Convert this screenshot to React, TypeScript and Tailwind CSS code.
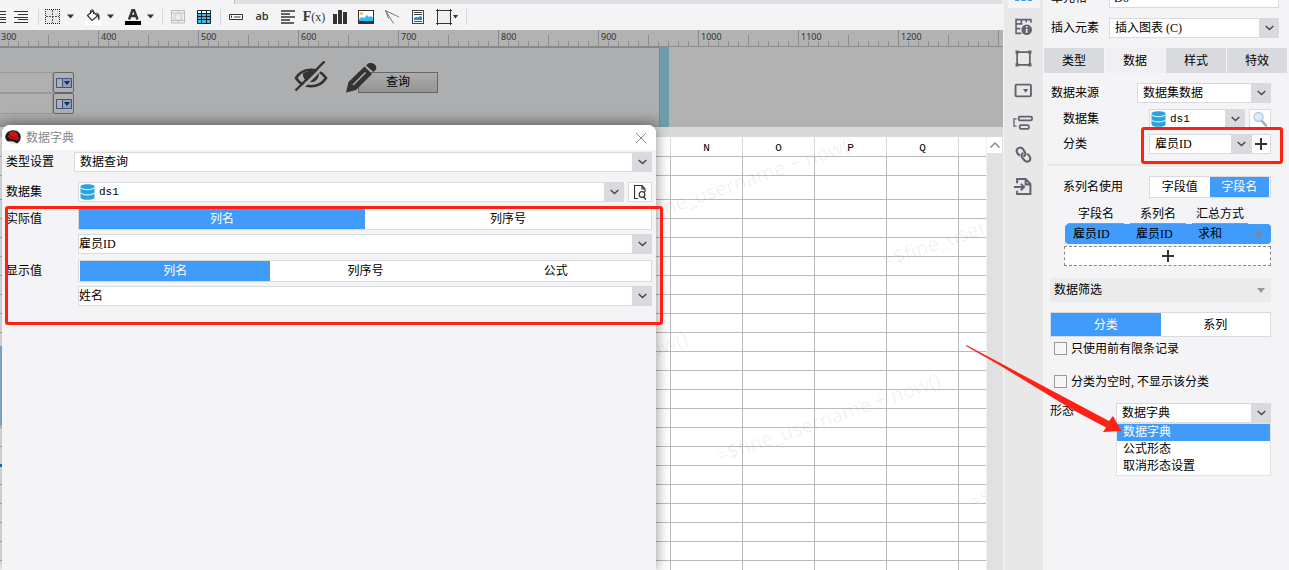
import type { ReactNode } from 'react';

const svgBase = { fill: 'none', 'aria-hidden': true } as const;

function Caret() {
  return (
    <svg {...svgBase} className="h-[5px] w-[7px] shrink-0" viewBox="0 0 7 5">
      <path d="M0 0.5h7L3.5 4.5z" fill="#333" />
    </svg>
  );
}

function Chevron() {
  return (
    <svg {...svgBase} className="h-[6px] w-[9px]" viewBox="0 0 9 6">
      <path d="M0.7 0.9 4.5 4.6 8.3 0.9" stroke="#45464a" strokeWidth="1.4" />
    </svg>
  );
}

function Database() {
  return (
    <svg {...svgBase} className="h-4 w-[15px]" viewBox="0 0 15 16">
      <path d="M0.5 2.6C0.5-.4 14.5-.4 14.5 2.6V13.4C14.5 16.6.5 16.6.5 13.4z" fill="#2ba3df" />
      <path d="M.5 3.6c1.500 2.700 12.500 2.700 14 0M.5 8.800c1.500 2.700 12.500 2.700 14 0" stroke="#d5effb" strokeWidth="1.100" />
    </svg>
  );
}

function Plus() {
  return (
    <svg {...svgBase} className="h-3 w-3" viewBox="0 0 12 12">
      <path d="M6 0v12M0 6h12" stroke="#333" strokeWidth="2" />
    </svg>
  );
}

type PickProps = { id: string; value: string; options?: string[]; className?: string; inset?: string; icon?: boolean };

function Pick({ id, value, options = [], className = '', inset = 'pl-[5px] text-xs', icon }: PickProps) {
  return (
    <div className={`relative h-5 ${className}`}>
      <select
        id={id}
        defaultValue={value}
        className={`block h-5 w-full appearance-none border border-[#d9dade] bg-white pr-5 leading-[18px] text-black outline-none ${inset}`}
      >
        <option>{value}</option>
        {options.map((o) => (
          <option key={o}>{o}</option>
        ))}
      </select>
      {icon && (
        <span className="pointer-events-none absolute top-[2px] left-[2px]">
          <Database />
        </span>
      )}
      <span className="pointer-events-none absolute inset-y-0 right-0 flex w-5 items-center justify-center bg-[#d9dade]">
        <Chevron />
      </span>
    </div>
  );
}

function Segments({ items, active, className = '' }: { items: string[]; active: number; className?: string }) {
  return (
    <div className={`flex border border-[#d9dade] bg-white ${className}`}>
      {items.map((t, i) => (
        <button
          key={t}
          type="button"
          className={i === active ? 'flex-1 bg-[#409bfa] text-white' : 'flex-1 text-black'}
        >
          {t}
        </button>
      ))}
    </div>
  );
}

function Tool({ label, children }: { label: string; children: ReactNode }) {
  return (
    <button type="button" aria-label={label} className="flex h-6 w-[26px] shrink-0 items-center justify-center">
      {children}
    </button>
  );
}

function DropTool({ label, children }: { label: string; children: ReactNode }) {
  return (
    <button type="button" aria-label={label} className="flex h-6 w-10 shrink-0 items-center gap-[6px] pl-[3px]">
      {children}
      <Caret />
    </button>
  );
}

function Rule() {
  return <span className="mr-[3px] ml-1 h-4 w-px shrink-0 bg-[#d6d6d8]" />;
}

function AlignRight() {
  return (
    <svg {...svgBase} className="h-3 w-[14px]" viewBox="0 0 14 12">
      <path d="M0 .5h14M4 3.500h10M0 6.500h14M4 8.500h10M0 11.500h14" stroke="#333" />
    </svg>
  );
}

function Toolbar() {
  return (
    <div className="flex h-[26px] items-center overflow-hidden bg-[#f4f4f7] pb-px">
      <div className="-ml-[18px] flex shrink-0">
        <button type="button" aria-label="居中" className="flex h-6 w-[26px] items-center justify-end pr-[2px]">
          <AlignRight />
        </button>
      </div>
      <Tool label="右对齐"><AlignRight /></Tool>
      <Rule />
      <DropTool label="边框">
        <svg {...svgBase} className="h-4 w-4" viewBox="0 0 16 16">
          <rect x=".5" y=".5" width="14" height="14" fill="#e9e9e9" />
          <path d="M0 .5h15M0 14.500h15M.5 0v15M14.500 0v15" stroke="#222" strokeDasharray="1 1" />
          <path d="M1 7.500h13M7.500 1v13" stroke="#555" strokeDasharray="2 1" />
        </svg>
      </DropTool>
      <DropTool label="填充">
        <svg {...svgBase} className="h-4 w-4" viewBox="0 0 16 16">
          <rect y="12" width="16" height="4" fill="#fff" />
          <path d="M2.500 6.500 7.500 2l5 5-5.500 4.500z" fill="#fff" stroke="#333" strokeWidth="1.200" />
          <path d="M5.500 5V1.500q1.500-1.800 3 0V5" stroke="#333" />
          <path d="M11 3.500c3 .5 4 2.500 3.500 7-1 1-1.500 0-1.500-1.500V7z" fill="#333" />
        </svg>
      </DropTool>
      <DropTool label="字体颜色">
        <svg {...svgBase} className="h-4 w-4" viewBox="0 0 16 16">
          <path d="m4 10.500 3.500-9.500h1.500l3.500 9.500M5.500 7h5.500" stroke="#333" strokeWidth="2.400" />
          <rect y="12" width="16" height="4" fill="#000" />
        </svg>
      </DropTool>
      <span className="mr-[2px] h-4 w-px shrink-0 bg-[#d6d6d8]" />
      <Tool label="合并单元格">
        <svg {...svgBase} className="h-[14px] w-[14px]" viewBox="0 0 14 14">
          <path d="M.5.5h13v12.500H.5zM.5 3h13M.5 10.500h13M7 .5V3M7 10.500V13" stroke="#bbb" />
          <rect x="2" y="4" width="10" height="6" fill="#ddd" />
          <circle cx="7" cy="7" r="1.500" stroke="#fff" />
        </svg>
      </Tool>
      <Tool label="表格">
        <svg {...svgBase} className="h-[14px] w-[14px]" viewBox="0 0 14 14">
          <rect x=".5" y=".5" width="13" height="13" fill="#42b8f5" />
          <rect x="1" y="1" width="12" height="3" fill="#fff" />
          <path d="M.5.5h13v13H.5zM0 3.500h14M0 6.500h14M0 9.500h14M4.500 0v14M9.500 0v14" stroke="#222" />
        </svg>
      </Tool>
      <span className="mr-[2px] ml-[3px] h-4 w-px shrink-0 bg-[#d6d6d8]" />
      <Tool label="文本框">
        <svg {...svgBase} className="h-[6px] w-[14px]" viewBox="0 0 14 6">
          <path d="M.5.5h13v5H.5z" stroke="#333" fill="#fff" />
          <path d="M2.500 1.500v2.500M5 3h6.500" stroke="#333" />
        </svg>
      </Tool>
      <Tool label="标签">
        <span className="font-['Open_Sans',sans-serif] text-[11px] font-semibold text-[#333]">ab</span>
      </Tool>
      <Tool label="段落">
        <svg {...svgBase} className="h-[14px] w-[14px]" viewBox="0 0 14 14">
          <path d="M0 1h14M0 4h9M0 7h14M0 10h9M0 13h13" stroke="#333" strokeWidth="1.600" />
        </svg>
      </Tool>
      <Tool label="公式">
        <span className="font-['Liberation_Serif',serif] text-sm leading-4 font-bold text-[#333]">
          F<span className="text-xs font-normal">(x)</span>
        </span>
      </Tool>
      <Tool label="图表">
        <svg {...svgBase} className="h-[14px] w-[14px]" viewBox="0 0 14 14">
          <path d="M0 4h4v10H0zM5 0h4v14H5zM10 2h4v12h-4z" fill="#333" />
        </svg>
      </Tool>
      <Tool label="图片">
        <svg {...svgBase} className="h-[14px] w-4" viewBox="0 0 16 14">
          <rect x=".5" y=".5" width="15" height="12.500" fill="#fff" stroke="#333" />
          <circle cx="3.500" cy="3.500" r="1.500" fill="#f7b84b" />
          <path d="M1 11V9l3-2 2 1 3-3 2 2 2-1 2 2v3z" fill="#35b9f5" />
          <path d="M0 11h16v3H0z" fill="#333" />
        </svg>
      </Tool>
      <Tool label="斜线">
        <svg {...svgBase} className="h-[14px] w-[14px]" viewBox="0 0 14 14">
          <path d="M.5.5 14 7M.5.5l8 13M.5.5l3 8" stroke="#777" />
        </svg>
      </Tool>
      <Tool label="子报表">
        <svg {...svgBase} className="h-[14px] w-3" viewBox="0 0 12 14">
          <rect x=".5" y=".5" width="11" height="13" fill="#fff" stroke="#444" />
          <path d="M2 2.500h8M2 4.500h8M2 11.500h8" stroke="#444" />
          <path d="M2 10V8l2-1 2 .5L8 6l2 1v3z" fill="#2187e8" />
        </svg>
      </Tool>
      <button type="button" aria-label="形状" className="flex h-6 w-[30px] shrink-0 items-center gap-px pl-[5px]">
        <svg {...svgBase} className="h-4 w-4" viewBox="0 0 16 16">
          <path d="M1.500 0v16M14.500 0v16M0 1.500h16M0 14.500h16" stroke="#333" />
          <path d="M2 2h12v12H2z" fill="#f0f0f0" />
        </svg>
        <svg {...svgBase} className="h-1 w-[5px]" viewBox="0 0 5 4"><path d="M0 0h5L2.500 3.500z" fill="#333" /></svg>
      </button>
      <span className="ml-[5px] h-4 w-px shrink-0 bg-[#d6d6d8]" />
    </div>
  );
}

const minorTicks = [10, 20, 30, 40, 60, 70, 80, 90];
const marks = ['300', '400', '500', '600', '700', '800', '900', '1000', '1100', '1200'];

function Ruler() {
  return (
    <div className="h-[17px] overflow-hidden border-b border-[#8c8c8c] bg-[#b2b2b2]">
      <div className="-ml-[2px] flex">
        {marks.map((m) => (
          <div key={m} className="relative h-4 w-[100px] shrink-0">
            <svg {...svgBase} className="h-4 w-[100px]" viewBox="0 0 100 16">
              <path d="M.5 0v16M50.500 5v11" stroke="#8c8c8c" />
              {minorTicks.map((x) => (
                <path key={x} d={`M${x + 0.5} 11v5`} stroke="#8c8c8c" />
              ))}
            </svg>
            <span className="absolute top-0 left-[3px] font-['Noto_Sans',sans-serif] text-[9px] leading-[13px] text-[#333]">{m}</span>
          </div>
        ))}
        <span className="h-4 w-px shrink-0 bg-[#8c8c8c]" />
      </div>
    </div>
  );
}

function ComboWidget() {
  return (
    <div className="flex h-[21px]">
      <span className="w-[53px] border border-l-0 border-[#999] bg-[#b0b0b0]" />
      <span className="flex w-[21px] items-center justify-center rounded-[2px] border border-[#666] bg-[#b0b0b0]">
        <svg {...svgBase} className="h-[10px] w-4" viewBox="0 0 16 10">
          <path d="M.5.5h15v9H.5z" stroke="#3c5480" fill="#b0b0b0" />
          <path d="M6.500.5h9v9h-9z" stroke="#3c5480" fill="#8ba0bd" />
          <path d="M8 3h6l-3 4z" fill="#14285a" />
        </svg>
      </span>
    </div>
  );
}

function FormCanvas() {
  return (
    <div className="flex h-20 shrink-0 bg-[#b2b2b2]">
      <div className="relative w-[660px] border-t border-r border-[#858585] bg-linear-to-b from-[#adaeb0] from-80% to-[#9c9d9f]">
        <div className="absolute top-6 left-0">
          <ComboWidget />
          <ComboWidget />
        </div>
        <button type="button" className="absolute top-6 left-[358px] h-[21px] w-20 border border-[#666] bg-linear-to-b from-[#acacac] to-[#949494] text-xs leading-[19px] text-black">
          查询
        </button>
        <svg {...svgBase} className="absolute top-[13px] left-[294px] h-8 w-[34px]" viewBox="0 0 34 32">
          <path d="M2 17C8 7 24 5 32 17 25 28 9 28 2 17z" stroke="#333" strokeWidth="2.600" />
          <path d="M9 12a8 8 0 1 0 15-2.500L17 9z" fill="#333" />
          <path d="m3.500 31.500 30-30" stroke="#adaeb0" strokeWidth="3" />
          <path d="m1.500 29.500 29-29" stroke="#333" strokeWidth="2.400" />
        </svg>
        <svg {...svgBase} className="absolute top-[14px] left-[346px] h-[31px] w-[31px]" viewBox="0 0 31 31">
          <path d="M0 30.500 2.500 20 18.500 4.500l7.500 7.500L10 28z" fill="#333" />
          <path d="M7 23 19.500 10.500" stroke="#b4b4b4" strokeWidth="1.500" />
          <path d="M21 2.500C24-1 32 2 30 7.500l-2.500 2.500-7.500-6.500z" fill="#333" />
        </svg>
      </div>
      <div className="w-[9px] bg-[#6e9da9]" />
    </div>
  );
}

const stamps = [
  'left-[634px] top-[72px]',
  'left-[886px] top-[114px]',
  'left-[467px] top-[267px]',
  'left-[720px] top-[309px]',
  'left-[973px] top-[355px]',
  'left-[553px] top-[508px]',
];
const letters = ['N', 'O', 'P', 'Q'];
const rowHeights = ['h-[19px]', 'h-[24px]', ...Array.from({ length: 20 }, () => 'h-[19px]')];

function Sheet() {
  return (
    <div className="flex min-h-0 flex-1 border-t-[10px] border-[#d9d9db] bg-white">
      <div className="relative min-w-0 flex-1 overflow-hidden">
        <table className="w-full table-fixed border-separate border-spacing-0">
          <colgroup>
            <col className="w-[671px]" />
            {letters.map((l) => <col key={l} className="w-[72px]" />)}
            <col />
          </colgroup>
          <thead>
            <tr className="h-5">
              <th className="border-r border-b border-r-[#d9d9db] border-b-[#bbb] p-0" />
              {letters.map((l) => (
                <th key={l} className="border-r border-b border-r-[#d9d9db] border-b-[#bbb] p-0 pt-[2px] font-['Liberation_Mono',monospace] text-[11px] leading-4 font-normal text-black">{l}</th>
              ))}
              <th className="border-b border-[#bbb] p-0" />
            </tr>
          </thead>
          <tbody>
            {rowHeights.map((h, r) => (
              <tr key={r} className={h}>
                <td className="border-r border-b border-[#bbb] p-0" />
                {letters.map((l) => <td key={l} className="border-r border-b border-[#bbb] p-0" />)}
                <td className="border-b border-[#bbb] p-0" />
              </tr>
            ))}
          </tbody>
        </table>
        <span className="absolute top-[209px] left-0 h-20 w-1 bg-[#9cc9ee]" />
        <span className="absolute top-[327px] left-0 h-[3px] w-1 bg-[#2b7de0]" />
        {stamps.map((s) => (
          <span key={s} className={`pointer-events-none absolute origin-bottom-left -rotate-[19deg] font-['Noto_Sans',sans-serif] text-xl leading-5 whitespace-nowrap text-black/6 ${s}`}>
            =$fine_username + now()
          </span>
        ))}
      </div>
      <div className="flex w-[17px] flex-col border-l border-[#eee] bg-[#e1e1e1]">
        <button type="button" aria-label="向上滚动" className="flex h-4 w-[15px] items-center justify-center bg-white">
          <svg {...svgBase} className="h-[6px] w-[10px]" viewBox="0 0 10 6"><path d="m.5 5.500 4.500-4.500 4.500 4.500" stroke="#777" strokeWidth="1.200" /></svg>
        </button>
      </div>
    </div>
  );
}

function HatLogo() {
  return (
    <svg {...svgBase} className="h-[15px] w-4" viewBox="0 0 16 15">
      <path d="M.3 7.500C0 4 3 .5 8 .3c5 0 8 3.500 7.700 7.200-.2 3-1.700 5-3.700 6L8 11.500 3 11.500C1.500 10.500.4 9 .3 7.500z" fill="#191919" />
      <path d="M4.500 2.500Q6 0 8.500 1.500q4-.7 4.500 5c2.500 2 1 4-2.500 3.500C6 9.500 2 7 3 5.500q.6-.8 1.500-.3z" fill="#d3121c" />
      <path d="M4.500 5.500q3 3 7.500 2.500" stroke="#6d0a10" />
      <path d="m4 10.500 2 1.500 4 .5 1 2-3-.8-3-.7z" fill="#ddd" />
    </svg>
  );
}

function DictionaryDialog() {
  return (
    <section role="dialog" aria-label="数据字典" className="absolute top-[125px] bottom-0 left-[2px] w-[654px] rounded-t-lg bg-[#f4f4f7] shadow-[0_0_14px_rgba(0,0,0,0.45)]">
      <header className="flex h-[25px] items-center rounded-t-lg bg-white pl-[3px]">
        <HatLogo />
        <h1 className="ml-[5px] flex-1 text-xs leading-[22px] text-[#888]">数据字典</h1>
        <button type="button" aria-label="关闭" className="mr-[10px] p-0">
          <svg {...svgBase} className="h-[10px] w-[10px]" viewBox="0 0 10 10"><path d="m0 0 10 10M10 0 0 10" stroke="#888" /></svg>
        </button>
      </header>
      <div className="flex flex-col pt-[2px] pr-1 pl-1">
        <div className="flex h-5 items-center">
          <label htmlFor="kind" className="w-[68px] shrink-0">类型设置</label>
          <Pick id="kind" value="数据查询" className="flex-1" />
        </div>
        <div className="mt-[10px] flex h-5 items-center">
          <label htmlFor="dataset" className="w-[72px] shrink-0">数据集</label>
          <Pick id="dataset" value="ds1" icon inset="pl-5 font-['Liberation_Mono',monospace] text-[11px]" className="flex-1" />
          <button type="button" aria-label="预览" className="ml-1 flex h-5 w-6 items-center justify-center border border-[#d9dade] bg-white">
            <svg {...svgBase} className="h-[15px] w-[13px]" viewBox="0 0 13 15">
              <path d="M4 13.500H.5V.5H8l3 3.500v3M8 .5V4h3" stroke="#333" strokeWidth="1.200" />
              <circle cx="8" cy="9.500" r="2.800" stroke="#333" strokeWidth="1.200" />
              <path d="m9.500 12 2.500 2.500" stroke="#333" strokeWidth="1.400" />
            </svg>
          </button>
        </div>
        <div className="mt-[6px] flex">
          <span className="w-[72px] shrink-0 leading-[22px]">实际值</span>
          <div className="flex flex-1 flex-col gap-1">
            <Segments items={['列名', '列序号']} active={0} className="h-[22px]" />
            <Pick id="actual" value="雇员ID" inset="pl-0 text-xs" />
          </div>
        </div>
        <div className="mt-[6px] flex">
          <span className="w-[72px] shrink-0 leading-[22px]">显示值</span>
          <div className="flex flex-1 flex-col gap-1">
            <Segments items={['列名', '列序号', '公式']} active={0} className="h-[22px] pl-px" />
            <Pick id="shown" value="姓名" inset="pl-0 text-xs" />
          </div>
        </div>
      </div>
      <div className="pointer-events-none absolute top-[81px] -right-[7px] left-[3px] h-[119px] rounded-[3px] border-[3px] border-[#ff2116]" />
    </section>
  );
}

const sideIcons: { name: string; art: ReactNode }[] = [
  { name: '属性', art: <path d="M0 15V1h4v14zM6 15V1h4v14zM12 15V1h4v14z" fill="#409bfa" /> },
  {
    name: '单元格属性',
    art: (
      <>
        <path d="M6 14.500H1v-14M1 1.500h14v3M1 5.500h6M1 10h4M6 1v5M10.500 1v3" stroke="#5f6470" strokeWidth="1.500" />
        <circle cx="11" cy="11" r="5" fill="#5f6470" />
        <path d="M11 10v4M11 7.500V9" stroke="#e8e8e8" strokeWidth="1.600" />
      </>
    ),
  },
  {
    name: '控件设置',
    art: (
      <>
        <path d="M2 2h12v12H2z" stroke="#5f6470" strokeWidth="1.600" />
        <path d="M.5.5h3v3h-3zM12.500.5h3v3h-3zM.5 12.500h3v3h-3zM12.500 12.500h3v3h-3z" fill="#5f6470" />
      </>
    ),
  },
  {
    name: '下拉控件',
    art: (
      <>
        <rect x=".5" y="2.500" width="14.500" height="11" rx="1" stroke="#5f6470" strokeWidth="1.800" />
        <path d="M7.500 6.500h5L10 10z" fill="#5f6470" />
      </>
    ),
  },
  {
    name: '条件属性',
    art: (
      <>
        <rect x="3.500" y="2.500" width="12.500" height="3.500" rx="1" stroke="#5f6470" strokeWidth="1.700" />
        <rect x="4.500" y="10.500" width="8.500" height="3.500" rx="1" stroke="#5f6470" strokeWidth="1.700" />
        <path d="M1.500 4.500H-1v7h2.500" stroke="#5f6470" strokeWidth="1.200" />
      </>
    ),
  },
  {
    name: '超级链接',
    art: (
      <g stroke="#5f6470" strokeWidth="2">
        <path d="M4.500 9C1 6.500 1 3.500 2.500 2.500c2-2 4-1 5 .5L9.500 6c.8 2-.2 3.200-1.500 4" />
        <path d="M11.500 7.500c3.500 2.500 3.500 5 2 6.500-2 1.500-4 .5-5-1L6.500 10.500C5.700 8.500 6.500 7 8 6.500" />
      </g>
    ),
  },
  {
    name: '导出',
    art: <path d="M2 5V1h8l4.500 4.500V15H2v-3M10 1v5h4.500M-1 8.500h9.500M5.500 5.500l3 3-3 3" stroke="#5f6470" strokeWidth="1.900" />,
  },
];

function SideBar() {
  return (
    <nav className="flex w-10 shrink-0 flex-col items-center overflow-hidden border-l border-[#f4f4f4] bg-[#e8e8e8]">
      <div className="-mt-[22px] flex flex-col">
        {sideIcons.map((s, i) => (
          <button
            key={s.name}
            type="button"
            aria-label={s.name}
            className={i === 0 ? 'mb-[2px] flex h-[30px] w-8 items-center justify-center bg-[#f4f4f7]' : 'flex h-8 w-8 items-center justify-center'}
          >
            <svg {...svgBase} className="h-[17px] w-[17px] overflow-visible" viewBox="0 0 16 16">{s.art}</svg>
          </button>
        ))}
      </div>
    </nav>
  );
}

const tabs = ['类型', '数据', '样式', '特效'];
const seriesHead = ['字段名', '系列名', '汇总方式'];
const seriesRow = ['雇员ID', '雇员ID', '求和'];

function PropertyPanel() {
  return (
    <aside className="relative w-[246px] shrink-0 bg-[#f4f4f7]">
      <div className="h-2 overflow-hidden">
        <div className="-mt-3 flex h-5 items-center pr-[10px] pl-2">
          <label htmlFor="cell" className="w-[58px] shrink-0 leading-5">单元格</label>
          <input id="cell" defaultValue="D6" className="h-5 min-w-0 flex-1 border border-[#d9dade] bg-white pl-1 outline-none" />
        </div>
      </div>
      <div className="mt-[10px] flex h-5 items-center pr-[10px] pl-2">
        <label htmlFor="element" className="w-[58px] shrink-0">插入元素</label>
        <Pick id="element" value="插入图表 (C)" className="flex-1" />
      </div>
      <div role="tablist" className="mt-[10px] mr-[2px] ml-px grid h-[25px] grid-cols-4 gap-px">
        {tabs.map((t) => (
          <button key={t} type="button" role="tab" aria-selected={t === '数据'} className={t === '数据' ? 'bg-[#f0f0f2]' : 'bg-[#d9dade]'}>
            {t}
          </button>
        ))}
      </div>
      <div className="flex flex-col pt-[10px] pr-[18px] pl-[7px]">
        <div className="flex h-5 items-center">
          <label htmlFor="source" className="w-[87px] shrink-0 pl-px">数据来源</label>
          <Pick id="source" value="数据集数据" className="flex-1" />
        </div>
        <div className="mt-[6px] flex h-5 items-center">
          <label htmlFor="set" className="w-[99px] shrink-0 pl-[13px]">数据集</label>
          <Pick id="set" value="ds1" icon inset="pl-5 font-['Liberation_Mono',monospace] text-[11px]" className="flex-1" />
          <button type="button" aria-label="预览数据" className="ml-1 flex h-5 w-[22px] items-center justify-center border border-[#d9dade] bg-white">
            <svg {...svgBase} className="h-4 w-4" viewBox="0 0 16 16">
              <path d="m9 9 5 5.500" stroke="#aaa9b0" strokeWidth="2.500" strokeLinecap="round" />
              <circle cx="6.500" cy="6" r="4.500" fill="#d8edfb" stroke="#b9c9d8" strokeWidth="1.400" />
            </svg>
          </button>
        </div>
        <div className="mt-[5px] flex h-5 items-center">
          <label htmlFor="category" className="w-[99px] shrink-0 pl-[13px]">分类</label>
          <Pick id="category" value="雇员ID" className="flex-1" />
          <button type="button" aria-label="添加分类" className="flex h-5 w-5 items-center justify-center border border-[#d9dade] bg-white">
            <Plus />
          </button>
        </div>
        <hr className="mt-[10px] -mr-2 -ml-[3px] border-t-2 border-[#ebe7dc]" />
        <div className="mt-[10px] flex h-[22px] items-center">
          <span className="w-[99px] shrink-0 pl-[13px]">系列名使用</span>
          <Segments items={['字段值', '字段名']} active={1} className="h-[22px] flex-1 pr-px" />
        </div>
        <div className="mt-[6px] pl-[15px]">
          <table className="w-full table-fixed border-separate border-spacing-0">
            <colgroup>
              <col className="w-[62px]" />
              <col className="w-[62px]" />
              <col className="w-[62px]" />
              <col />
            </colgroup>
            <thead>
              <tr>
                {seriesHead.map((h) => (
                  <th key={h} className="h-5 px-[3px] py-0 font-normal whitespace-nowrap">
                    <span className="block h-5 border-b border-[#999] leading-5">{h}</span>
                  </th>
                ))}
                <th className="p-0" />
              </tr>
            </thead>
            <tbody>
              <tr className="h-5">
                {seriesRow.map((c, i) => (
                  <td key={i} className={i === 0 ? 'rounded-l-[4px] bg-[#409bfa] p-0 pl-2 leading-5' : 'bg-[#409bfa] p-0 pl-[9px] leading-5'}>{c}</td>
                ))}
                <td className="rounded-r-[4px] bg-[#409bfa] p-0">
                  <button type="button" aria-label="删除" className="flex h-5 items-center pl-1">
                    <svg {...svgBase} className="h-2 w-2" viewBox="0 0 8 8"><path d="m1 1 6 6M7 1 1 7" stroke="#7b8794" strokeWidth="2" /></svg>
                  </button>
                </td>
              </tr>
            </tbody>
          </table>
        </div>
        <button type="button" aria-label="添加系列" className="mt-[2px] ml-[14px] flex h-5 items-center justify-center border border-dashed border-[#888] bg-white">
          <Plus />
        </button>
        <button type="button" className="mt-3 flex h-6 items-center justify-between bg-[#ebebeb] pr-[6px] pl-1">
          数据筛选
          <svg {...svgBase} className="h-[5px] w-2" viewBox="0 0 8 5"><path d="M0 0h8L4 5z" fill="#999" /></svg>
        </button>
        <Segments items={['分类', '系列']} active={0} className="mt-[10px] h-[25px]" />
        <label className="mt-[5px] flex h-[13px] items-center gap-1 pl-1">
          <input type="checkbox" className="h-[13px] w-[13px] appearance-none border border-[#999] bg-[#f7f7f9]" />
          只使用前有限条记录
        </label>
        <label className="mt-5 flex h-[13px] items-center gap-1 pl-1">
          <input type="checkbox" className="h-[13px] w-[13px] appearance-none border border-[#999] bg-[#f7f7f9]" />
          分类为空时, 不显示该分类
        </label>
        <div className="mt-[15px] flex items-start">
          <label htmlFor="form" className="w-[66px] shrink-0 leading-4">形态</label>
          <div className="min-w-0 flex-1">
            <Pick id="form" value="数据字典" options={['公式形态', '取消形态设置']} />
            <ul role="listbox" aria-label="形态" className="border border-[#e2e2e5] bg-white leading-[17px]">
              <li role="option" aria-selected="true" className="bg-[#409bfa] pl-[6px] text-white">数据字典</li>
              <li role="option" aria-selected="false" className="pl-[6px]">公式形态</li>
              <li role="option" aria-selected="false" className="pl-[6px]">取消形态设置</li>
            </ul>
          </div>
        </div>
      </div>
      <div className="pointer-events-none absolute top-[127px] right-[6px] left-[98px] h-[37px] rounded-[3px] border-[3px] border-[#ff2116]" />
      <svg {...svgBase} className="pointer-events-none absolute top-[345px] right-[167px] z-10 h-[88px] w-[156px] overflow-visible" viewBox="0 0 156 88">
        <path d="M.5 0 143 76 147 71 155.500 86 137 87 140 82.500 107 65 34 20.500 0 1z" fill="#ff2116" />
      </svg>
    </aside>
  );
}

export default function App() {
  return (
    <div className="relative flex h-screen overflow-hidden bg-[#f4f4f7] font-['Liberation_Serif','Noto_Sans_CJK_SC',sans-serif] text-xs text-black">
      <main className="flex min-w-0 flex-1 flex-col">
        <div className="flex h-1 shrink-0">
          <span className="w-[235px] border-r border-[#bbb] bg-[#f4f4f7]" />
          <span className="flex-1 bg-[#e0e0e2]" />
        </div>
        <Toolbar />
        <Ruler />
        <FormCanvas />
        <Sheet />
      </main>
      <DictionaryDialog />
      <SideBar />
      <PropertyPanel />
    </div>
  );
}
